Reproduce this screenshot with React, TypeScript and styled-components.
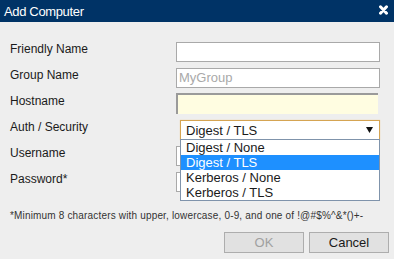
import React from 'react';
import styled, {createGlobalStyle} from 'styled-components';

const GlobalStyle = createGlobalStyle`
    html, body {
        margin: 0;
        padding: 0;
        background: #eeeeee;
    }
    * {
        box-sizing: border-box;
    }
`

const Dialog = styled.div`
    width: 394px;
    height: 259px;
    background: #eeeeee;
    font-family: "Liberation Sans", Arial, sans-serif;
    color: #1a1a1a;
    overflow: hidden;
`

const TitleBar = styled.div`
    height: 22px;
    background: #003366;
    color: #ffffff;
    display: flex;
    align-items: center;
    justify-content: space-between;
    padding: 0 6px 0 4px;
    font-size: 13px;
    letter-spacing: -0.35px;
`

const CloseIcon = styled.svg`
    width: 9px;
    height: 10px;
    margin-bottom: 3px;
`

const Form = styled.div`
    display: grid;
    grid-template-columns: 166px 204px;
    grid-auto-rows: 20px;
    row-gap: 6px;
    padding: 20px 0 0 10px;
`

const Label = styled.div`
    font-size: 12px;
    line-height: 14px;
    align-self: start;
`

const TextInput = styled.div`
    height: 20px;
    background: #ffffff;
    border: 1px solid #a9a9a9;
    font-size: 13px;
    line-height: 18px;
    padding-left: 2px;
    color: #a9a9a9;
`

const FocusInput = styled.div`
    height: 21px;
    margin-top: -1px;
    width: 202px;
    background: #fffde1;
    border-top: 2px solid #9a9a9a;
    border-left: 2px solid #9a9a9a;
`

const SelectWrap = styled.div`
    position: relative;
    margin-left: 4px;
    width: 200px;
`

const SelectBox = styled.div`
    height: 20px;
    background: #ffffff;
    border: 1px solid #d5a452;
    box-shadow: 0 0 1px 0 #ebc98c;
    display: flex;
    align-items: center;
    justify-content: space-between;
    padding: 0 6px 0 5px;
    font-size: 13px;
`

const Arrow = styled.svg`
    width: 7px;
    height: 6px;
`

const OptionList = styled.div`
    position: absolute;
    top: 19px;
    left: 0;
    width: 200px;
    background: #ffffff;
    border: 1px solid #7f93ab;
    z-index: 2;
`

const Option = styled.div<{$selected?: boolean}>`
    height: 15px;
    line-height: 15px;
    font-size: 13px;
    padding-left: 5px;
    background: ${p => p.$selected ? '#1e90ff' : 'transparent'};
    color: ${p => p.$selected ? '#ffffff' : '#1a1a1a'};
`

const Note = styled.div`
    font-size: 10px;
    color: #333333;
    padding: 18px 0 0 10px;
    letter-spacing: 0.17px;
`

const Buttons = styled.div`
    display: flex;
    justify-content: flex-end;
    gap: 5px;
    padding: 11px 5px 0 0;
`

const Button = styled.div<{$disabled?: boolean}>`
    width: 80px;
    height: 21px;
    background: #e1e1e1;
    border: 1px solid #adadad;
    font-size: 13px;
    line-height: 19px;
    text-align: center;
    color: ${p => p.$disabled ? '#a0a0a0' : '#1a1a1a'};
`

const options = ['Digest / None', 'Digest / TLS', 'Kerberos / None', 'Kerberos / TLS'];

const App: React.FC = () => {
    return (
        <Dialog>
            <GlobalStyle />
            <TitleBar>
                <span>Add Computer</span>
                <CloseIcon viewBox="0 0 9 10">
                    <path d="M1.5 1.8 L7.5 8.2 M7.5 1.8 L1.5 8.2" stroke="#ffffff" strokeWidth="3" strokeLinecap="round" />
                </CloseIcon>
            </TitleBar>
            <Form>
                <Label>Friendly Name</Label>
                <TextInput />
                <Label>Group Name</Label>
                <TextInput>MyGroup</TextInput>
                <Label>Hostname</Label>
                <FocusInput />
                <Label>Auth / Security</Label>
                <SelectWrap>
                    <SelectBox>
                        <span>Digest / TLS</span>
                        <Arrow viewBox="0 0 7 6">
                            <path d="M0 0 L7 0 L3.5 6 Z" fill="#111111" />
                        </Arrow>
                    </SelectBox>
                    <OptionList>
                        {options.map(o => (
                            <Option key={o} $selected={o === 'Digest / TLS'}>{o}</Option>
                        ))}
                    </OptionList>
                </SelectWrap>
                <Label>Username</Label>
                <TextInput />
                <Label>Password*</Label>
                <TextInput />
            </Form>
            <Note>*Minimum 8 characters with upper, lowercase, 0-9, and one of !@#$%^&amp;*()+-</Note>
            <Buttons>
                <Button $disabled>OK</Button>
                <Button>Cancel</Button>
            </Buttons>
        </Dialog>
    )
}

export default App
